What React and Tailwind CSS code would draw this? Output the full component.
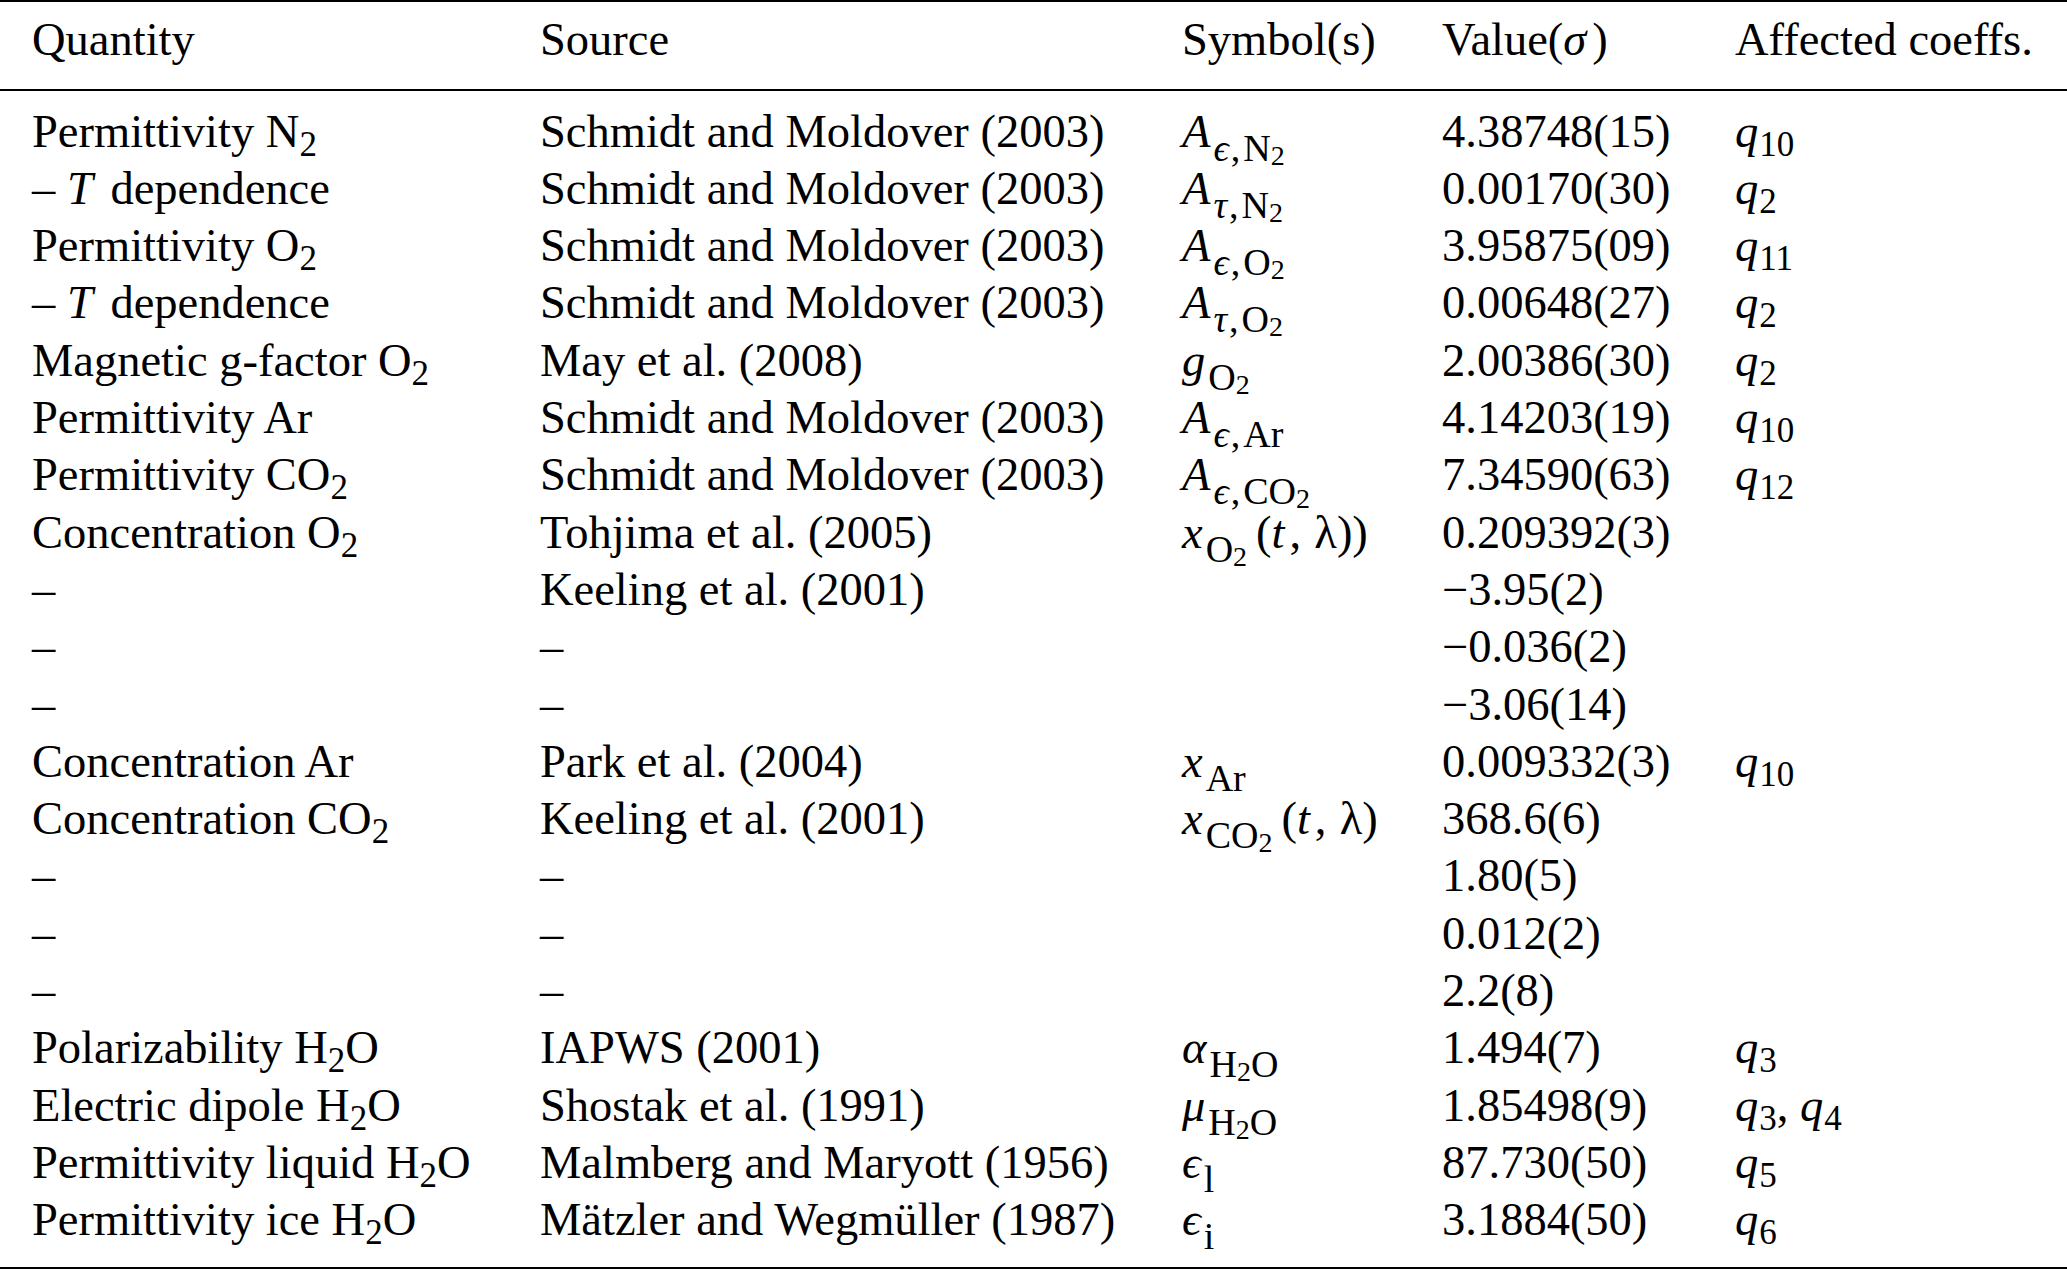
import React from "react";

// text subscript (N2, H2O in plain text)
function Sub({ children }) {
  return <span className="text-[35px] leading-[0] align-[-9px]">{children}</span>;
}

// math subscript and its nested sub-subscript
function MSub({ children, low = "deep" }) {
  return (
    <span
      className={
        low === "q"
          ? "text-[35px] leading-[0] align-[-9px] ml-[1px]"
          : "text-[38px] leading-[0] align-[-14px] ml-[3px]"
      }
    >
      {children}
    </span>
  );
}

function SSub({ children }) {
  return <span className="text-[28px] leading-[0] align-[-4px]">{children}</span>;
}

function I({ children, className = "" }) {
  return <span className={"italic " + className}>{children}</span>;
}

const eps = "\u03F5";

function Q({ n }) {
  return (
    <span>
      <I>q</I>
      <MSub low="q">{n}</MSub>
    </span>
  );
}

function TDep() {
  return (
    <span>
      – <I className="mr-[6px]">T</I> dependence
    </span>
  );
}

function A({ s, children }) {
  return (
    <span>
      <I>A</I>
      <MSub>
        <I className="mr-[2px]">{s}</I>
        <span className="mr-[3px]">,</span>
        {children}
      </MSub>
    </span>
  );
}

function Args({ extra = "" }) {
  return (
    <span className="ml-[9px]">
      (<I className="mr-[5px]">t</I>
      {",\u2009\u200Aλ)" + extra}
    </span>
  );
}

const SM = "Schmidt and Moldover (2003)";

const rows = [
  [<>Permittivity N<Sub>2</Sub></>, SM, <A s={eps}>N<SSub>2</SSub></A>, "4.38748(15)", <Q n="10" />],
  [<TDep />, SM, <A s="τ">N<SSub>2</SSub></A>, "0.00170(30)", <Q n="2" />],
  [<>Permittivity O<Sub>2</Sub></>, SM, <A s={eps}>O<SSub>2</SSub></A>, "3.95875(09)", <Q n="11" />],
  [<TDep />, SM, <A s="τ">O<SSub>2</SSub></A>, "0.00648(27)", <Q n="2" />],
  [
    <>Magnetic g-factor O<Sub>2</Sub></>,
    "May et al. (2008)",
    <span><I>g</I><MSub>O<SSub>2</SSub></MSub></span>,
    "2.00386(30)",
    <Q n="2" />,
  ],
  [<>Permittivity Ar</>, SM, <A s={eps}>Ar</A>, "4.14203(19)", <Q n="10" />],
  [<>Permittivity CO<Sub>2</Sub></>, SM, <A s={eps}>CO<SSub>2</SSub></A>, "7.34590(63)", <Q n="12" />],
  [
    <>Concentration O<Sub>2</Sub></>,
    "Tohjima et al. (2005)",
    <span>
      <I>x</I>
      <MSub>O<SSub>2</SSub></MSub>
      <Args extra=")" />
    </span>,
    "0.209392(3)",
    null,
  ],
  ["–", "Keeling et al. (2001)", null, "−3.95(2)", null],
  ["–", "–", null, "−0.036(2)", null],
  ["–", "–", null, "−3.06(14)", null],
  [
    <>Concentration Ar</>,
    "Park et al. (2004)",
    <span><I>x</I><MSub>Ar</MSub></span>,
    "0.009332(3)",
    <Q n="10" />,
  ],
  [
    <>Concentration CO<Sub>2</Sub></>,
    "Keeling et al. (2001)",
    <span>
      <I>x</I>
      <MSub>CO<SSub>2</SSub></MSub>
      <Args />
    </span>,
    "368.6(6)",
    null,
  ],
  ["–", "–", null, "1.80(5)", null],
  ["–", "–", null, "0.012(2)", null],
  ["–", "–", null, "2.2(8)", null],
  [
    <>Polarizability H<Sub>2</Sub>O</>,
    "IAPWS (2001)",
    <span><I>α</I><MSub>H<SSub>2</SSub>O</MSub></span>,
    "1.494(7)",
    <Q n="3" />,
  ],
  [
    <>Electric dipole H<Sub>2</Sub>O</>,
    "Shostak et al. (1991)",
    <span><I>μ</I><MSub>H<SSub>2</SSub>O</MSub></span>,
    "1.85498(9)",
    <span><Q n="3" />, <Q n="4" /></span>,
  ],
  [
    <>Permittivity liquid H<Sub>2</Sub>O</>,
    "Malmberg and Maryott (1956)",
    <span><I>{eps}</I><MSub>l</MSub></span>,
    "87.730(50)",
    <Q n="5" />,
  ],
  [
    <>Permittivity ice H<Sub>2</Sub>O</>,
    "Mätzler and Wegmüller (1987)",
    <span><I>{eps}</I><MSub>i</MSub></span>,
    "3.1884(50)",
    <Q n="6" />,
  ],
];

const cols = "grid grid-cols-[508px_642px_260px_293px_1fr] pl-[32px] h-[57.3px] leading-[57.3px] whitespace-nowrap";

export default function App() {
  return (
    <div className="w-[2067px] h-[1270px] bg-white text-black font-['Liberation_Serif',serif] text-[46.5px]">
      <div className="border-t-2 border-b-2 border-black pt-[8.6px] pb-[21.2px]">
        <div className={cols}>
          <div>Quantity</div>
          <div>Source</div>
          <div>Symbol(s)</div>
          <div>
            Value(<I className="mr-[6px]">σ</I>)
          </div>
          <div>Affected coeffs.</div>
        </div>
      </div>
      <div className="border-b-2 border-black pt-[11.5px] pb-[18.4px]">
        {rows.map((r, i) => (
          <div key={i} className={cols}>
            {r.map((c, j) => (
              <div key={j}>{c}</div>
            ))}
          </div>
        ))}
      </div>
    </div>
  );
}
